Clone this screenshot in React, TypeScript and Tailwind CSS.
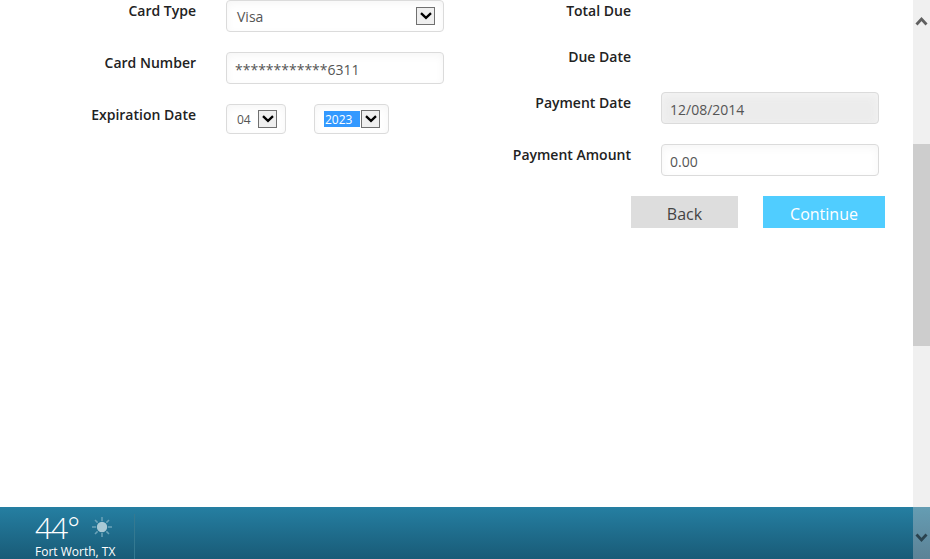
import type { ReactNode } from "react";

const fieldShell =
  "flex rounded-[4px] border border-[#dbdbdb] text-[#555] shadow-[inset_0_3px_8px_#f6f6f6]";

function Row({ label, children, className = "" }: { label: string; children?: ReactNode; className?: string }) {
  return (
    <div className={`flex items-start gap-[30px] ${className}`}>
      <label className="w-[150px] shrink-0 text-right text-[14px] leading-[22px] font-semibold whitespace-nowrap text-[#222]">
        {label}
      </label>
      {children}
    </div>
  );
}

function DropArrow() {
  return (
    <span className="flex h-[18px] w-[19px] shrink-0 items-center justify-center border border-[#707070] bg-[#efefef]">
      <svg width="13" height="8" viewBox="0 0 13 8" fill="none" stroke="#000" strokeWidth="2.3">
        <path d="M2 1.2 L7 5.9 L12 1.2" />
      </svg>
    </span>
  );
}

function TextField({ value, readOnly = false }: { value: string; readOnly?: boolean }) {
  return (
    <div
      className={`h-8 w-[218px] rounded-[4px] border border-[#dbdbdb] px-2 pt-[6px] text-[14px] leading-[22px] text-[#555] ${
        readOnly ? "bg-[#ececec] shadow-[inset_0_3px_8px_#f4f4f4]" : "bg-white shadow-[inset_0_3px_8px_#f6f6f6]"
      }`}
    >
      {value}
    </div>
  );
}

function SunIcon() {
  return (
    <svg width="20" height="20" viewBox="0 0 20 20" stroke="#6ba3b8" strokeWidth="1.5">
      <path d="M10 0v4M10 16v4M0 10h4M16 10h4M3 3l2.6 2.6M14.4 14.4L17 17M3 17l2.6-2.6M14.4 5.6L17 3" />
      <circle cx="10" cy="10" r="5.2" fill="#a9c9d5" stroke="none" />
    </svg>
  );
}

export default function App() {
  return (
    <div className="flex h-[559px] w-[930px] flex-col overflow-hidden bg-white font-['Open_Sans','Noto_Sans',sans-serif]">
      <div className="flex h-[507px]">
        <main className="flex w-[913px] items-start">
          <section className="flex w-[435px] flex-col gap-5 pl-[46px]">
            <Row label="Card Type">
              <div className={`${fieldShell} h-8 w-[218px] shrink-0 items-center justify-between pr-2 pl-[10px] text-[14px]`}>
                <span className="pt-px">Visa</span>
                <DropArrow />
              </div>
            </Row>
            <Row label="Card Number">
              <div className="shrink-0">
                <TextField value="************6311" />
              </div>
            </Row>
            <Row label="Expiration Date">
              <div className="flex shrink-0 gap-7">
                <div className={`${fieldShell} h-[30px] w-[60px] items-center justify-between pr-2 pl-[10px] text-[12px]`}>
                  <span className="pt-px">04</span>
                  <DropArrow />
                </div>
                <div className={`${fieldShell} h-[30px] w-[75px] items-center justify-between pr-2 pl-[9px] text-[12px]`}>
                  <span className="h-4 w-9 bg-[#3399ff] pl-px leading-[17px] text-white">2023</span>
                  <DropArrow />
                </div>
              </div>
            </Row>
          </section>

          <section className="flex w-[478px] flex-col pl-[46px]">
            <Row label="Total Due" className="h-[46px]" />
            <Row label="Due Date" className="h-[46px]" />
            <Row label="Payment Date" className="h-[52px]">
              <TextField value="12/08/2014" readOnly />
            </Row>
            <Row label="Payment Amount" className="h-[52px]">
              <TextField value="0.00" />
            </Row>
            <div className="flex gap-[25px] pl-[150px] text-[16px] leading-[36px]">
              <button className="h-8 w-[107px] bg-[#ddd] text-[#444]">Back</button>
              <button className="h-8 w-[122px] bg-[#50cdff] text-white">Continue</button>
            </div>
          </section>
        </main>

        <aside className="flex w-[17px] flex-col bg-[#f0f0f0]">
          <div className="flex h-[144px] justify-center pt-[16px]">
            <svg width="13" height="11" viewBox="0 0 13 11" fill="none" stroke="#606060" strokeWidth="2.8">
              <path d="M1.5 8.5 L6.5 3 L11.5 8.5" />
            </svg>
          </div>
          <div className="h-[202px] bg-[#cdcdcd]" />
        </aside>
      </div>

      <footer className="flex h-[52px] text-white">
        <div className="flex w-[913px] bg-linear-to-b from-[#257fa2] to-[#195b77] pl-[35px]">
          <div className="flex w-[99px] flex-col">
            <div className="flex h-[37px] gap-3">
              <span className="w-[45px] text-[30px] leading-[41px] font-light tracking-[-1px]">44°</span>
              <span className="pt-[10px]">
                <SunIcon />
              </span>
            </div>
            <span className="text-[12px] leading-[16px] whitespace-nowrap">Fort Worth, TX</span>
          </div>
          <div className="mt-[7px] w-px bg-[#347991]" />
        </div>
        <div className="flex w-[17px] justify-center bg-linear-to-b from-[#659db3] to-[#5c8296] pt-[25px]">
          <svg width="13" height="11" viewBox="0 0 13 11" fill="none" stroke="#2a434f" strokeWidth="2.8">
            <path d="M1.5 2.5 L6.5 8 L11.5 2.5" />
          </svg>
        </div>
      </footer>
    </div>
  );
}
